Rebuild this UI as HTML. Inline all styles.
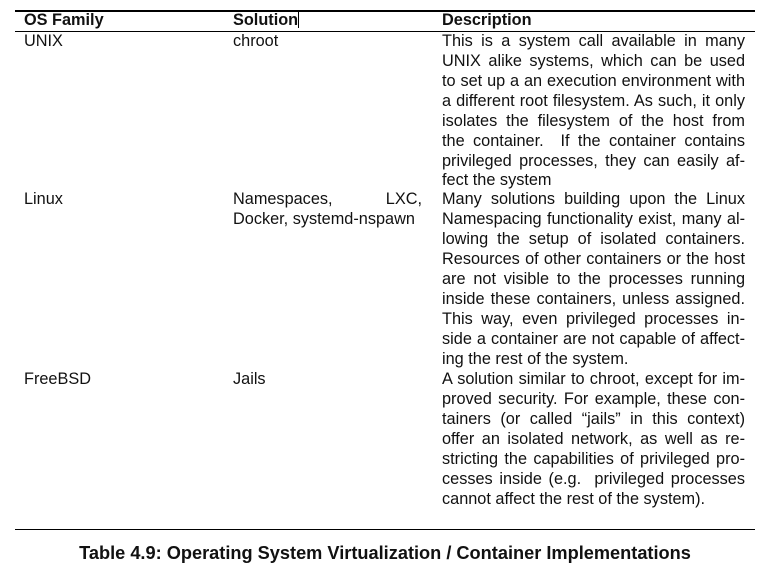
<!DOCTYPE html>
<html><head><meta charset="utf-8"><style>
html,body{margin:0;padding:0;background:#fff;width:772px;height:571px;overflow:hidden}
body{position:relative;font-family:"Liberation Sans",Arial,sans-serif;font-size:16.3px;color:#111}
.hr{position:absolute;left:15px;width:740px;background:#000}
.t{position:absolute;white-space:nowrap;line-height:20px}
.d{position:absolute;left:442px;width:303px;line-height:20px;text-align:justify;text-align-last:justify;white-space:nowrap}
.d.l{text-align-last:left}
b{font-weight:bold}
.cap{position:absolute;top:542px;left:0;width:770px;text-align:center;font-weight:bold;font-size:18.2px;line-height:22px}
</style></head><body>
<div class="hr" style="top:10px;height:2px"></div>
<div class="hr" style="top:31px;height:1px"></div>
<div class="hr" style="top:529px;height:1px"></div>
<div class="t" style="left:24px;top:10px"><b>OS Family</b></div>
<div class="t" style="left:233px;top:10px"><b>Solution</b><span style="display:inline-block;width:1px;height:18px;background:#000;vertical-align:-3px"></span></div>
<div class="t" style="left:442px;top:10px"><b>Description</b></div>

<div class="t" style="left:24px;top:31px">UNIX</div>
<div class="t" style="left:233px;top:31px">chroot</div>
<div class="t" style="left:24px;top:189px">Linux</div>
<div class="t" style="left:233px;top:189px;width:189px;text-align:justify;text-align-last:justify">Namespaces, LXC,</div>
<div class="t" style="left:233px;top:209px">Docker, systemd-nspawn</div>
<div class="t" style="left:24px;top:369px">FreeBSD</div>
<div class="t" style="left:233px;top:369px">Jails</div>

<div class="d" style="top:31px">This is a system call available in many</div>
<div class="d" style="top:51px">UNIX alike systems, which can be used</div>
<div class="d" style="top:71px">to set up a an execution environment with</div>
<div class="d" style="top:91px">a different root filesystem. As such, it only</div>
<div class="d" style="top:111px">isolates the filesystem of the host from</div>
<div class="d" style="top:131px">the container.&nbsp; If the container contains</div>
<div class="d" style="top:151px">privileged processes, they can easily af-</div>
<div class="d l" style="top:170px">fect the system</div>
<div class="d" style="top:189px">Many solutions building upon the Linux</div>
<div class="d" style="top:209px">Namespacing functionality exist, many al-</div>
<div class="d" style="top:229px">lowing the setup of isolated containers.</div>
<div class="d" style="top:249px">Resources of other containers or the host</div>
<div class="d" style="top:269px">are not visible to the processes running</div>
<div class="d" style="top:289px">inside these containers, unless assigned.</div>
<div class="d" style="top:309px">This way, even privileged processes in-</div>
<div class="d" style="top:329px">side a container are not capable of affect-</div>
<div class="d l" style="top:349px">ing the rest of the system.</div>
<div class="d" style="top:369px">A solution similar to chroot, except for im-</div>
<div class="d" style="top:389px">proved security. For example, these con-</div>
<div class="d" style="top:409px">tainers (or called “jails” in this context)</div>
<div class="d" style="top:429px">offer an isolated network, as well as re-</div>
<div class="d" style="top:449px">stricting the capabilities of privileged pro-</div>
<div class="d" style="top:469px">cesses inside (e.g.&nbsp; privileged processes</div>
<div class="d l" style="top:489px">cannot affect the rest of the system).</div>

<div class="cap">Table 4.9: Operating System Virtualization / Container Implementations</div>
</body></html>
